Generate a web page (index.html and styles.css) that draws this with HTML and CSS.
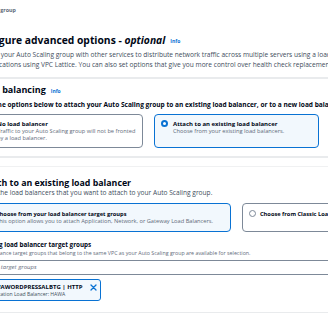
FILE: index.html
```html
<!DOCTYPE html>
<html lang="en">
<head>
  <meta charset="UTF-8">
  <title>Configure advanced options</title>
  <link rel="stylesheet" href="styles.css">
</head>
<body>
  <div class="page">
    <div class="crumbs">Create Auto Scaling group</div>

    <header class="page-head">
      <h1>Configure advanced options - <i>optional</i><a class="info" href="#">Info</a></h1>
      <p class="lead">Integrate your Auto Scaling group with other services to distribute network traffic across multiple servers using a load balancer or to establish service-to-service<br><span class="lead-wrap">communications using VPC Lattice. You can also set options that give you more control over health check replacements and monitoring.</span></p>
    </header>

    <section class="panel panel-first">
      <h2>Load balancing<a class="info" href="#">Info</a></h2>
      <p class="hint">Use the options below to attach your Auto Scaling group to an existing load balancer, or to a new load balancer that you define.</p>
      <div class="tiles tiles-3">
        <label class="tile">
          <span class="radio"></span>
          <span>
            <span class="tile-title">No load balancer</span>
            <span class="tile-desc">Traffic to your Auto Scaling group will not be fronted<br>by a load balancer.</span>
          </span>
        </label>
        <label class="tile selected">
          <span class="radio on"></span>
          <span>
            <span class="tile-title">Attach to an existing load balancer</span>
            <span class="tile-desc">Choose from your existing load balancers.</span>
          </span>
        </label>
        <label class="tile">
          <span class="radio"></span>
          <span>
            <span class="tile-title">Attach to a new load balancer</span>
            <span class="tile-desc">Quickly create a basic load balancer to attach to your Auto Scaling group.</span>
          </span>
        </label>
      </div>
    </section>

    <section class="panel panel-second">
      <h2>Attach to an existing load balancer</h2>
      <p class="desc">Select the load balancers that you want to attach to your Auto Scaling group.</p>
      <div class="tiles tiles-2">
        <label class="tile tile-lg selected">
          <span class="radio on"></span>
          <span>
            <span class="tile-title">Choose from your load balancer target groups</span>
            <span class="tile-desc">This option allows you to attach Application, Network, or Gateway Load Balancers.</span>
          </span>
        </label>
        <label class="tile tile-lg">
          <span class="radio"></span>
          <span>
            <span class="tile-title">Choose from Classic Load Balancers</span>
          </span>
        </label>
      </div>

      <div class="field">
        <div class="field-label">Existing load balancer target groups</div>
        <div class="field-desc">Only instance target groups that belong to the same VPC as your Auto Scaling group are available for selection.</div>
        <div class="select">Select target groups</div>
        <div class="token">
          <div>
            <div class="token-name">HAWAWORDPRESSALBTG | HTTP</div>
            <div class="token-desc">Application Load Balancer: HAWA</div>
          </div>
          <svg class="token-x" width="7" height="7" viewBox="0 0 7 7">
            <path d="M1 1 L6 6 M6 1 L1 6" stroke="#0972d3" stroke-width="1.3" stroke-linecap="round" fill="none"/>
          </svg>
        </div>
      </div>
    </section>
  </div>
</body>
</html>
```

FILE: styles.css
```css
* {
  box-sizing: border-box;
  margin: 0;
  padding: 0;
}
body {
  background: #fff;
  color: #000716;
  font-family: 'Open Sans', 'Liberation Sans', sans-serif;
  overflow: hidden;
  width: 328px;
  height: 320px;
}
.page {
  margin-left: -28px;
  width: 760px;
}
.crumbs {
  width: 44px;
  margin-top: 6px;
  display: flex;
  justify-content: flex-end;
  white-space: nowrap;
  font-size: 5.4px;
  line-height: 8px;
  font-weight: bold;
  color: #5f6b7a;
}
.page-head h1 {
  margin-top: 19px;
  font-size: 10.3px;
  line-height: 14px;
  font-weight: bold;
}
.info {
  color: #0972d3;
  font-size: 5px;
  font-weight: bold;
  font-style: normal;
  margin-left: 5px;
  text-decoration: none;
  vertical-align: middle;
}
.lead {
  margin-top: 2px;
  margin-left: -1px;
  font-size: 6.6px;
  line-height: 10px;
  color: #414d5c;
  white-space: nowrap;
}
.lead-wrap {
  margin-left: -1px;
}
.panel {
  padding-left: 6px;
}
.panel-first {
  margin-top: 7px;
  border-top: 2px solid #e9ebed;
  border-bottom: 2px solid #e9ebed;
  padding-top: 5px;
  padding-bottom: 8px;
}
.panel-second {
  margin-top: 8px;
  border-top: 1px solid #f0f1f2;
  border-bottom: 1px solid #e9ebed;
  padding-top: 10px;
  padding-bottom: 11px;
}
h2 {
  font-size: 9px;
  line-height: 12px;
  font-weight: bold;
}
.panel-second h2 {
  font-size: 8.8px;
}
.hint {
  margin-top: 4px;
  margin-left: 3px;
  font-size: 6.55px;
  line-height: 8px;
  font-weight: bold;
  white-space: nowrap;
}
.desc {
  font-size: 6.6px;
  line-height: 8px;
  color: #414d5c;
  white-space: nowrap;
}
.tiles {
  display: grid;
  gap: 11px;
  margin-top: 5px;
}
.tiles-3 {
  grid-template-columns: repeat(3, 165px);
}
.tiles-2 {
  margin-top: 6px;
  grid-template-columns: repeat(2, 253px);
}
.tile {
  display: flex;
  gap: 5px;
  border: 1px solid #7d8998;
  border-radius: 4px;
  padding: 5px 6px;
  background: #fff;
}
.tile-lg {
  padding: 6px;
  gap: 4px;
}
.tile.selected {
  border-color: #0972d3;
  background: #f2f8fd;
}
.radio {
  flex: none;
  width: 7px;
  height: 7px;
  border-radius: 50%;
  border: 1px solid #7d8998;
  background: #fff;
  margin-top: 0.5px;
}
.radio.on {
  border: 2px solid #0972d3;
}
.tile-title {
  display: block;
  font-size: 6px;
  line-height: 8px;
  font-weight: bold;
  white-space: nowrap;
}
.tile-lg .tile-title {
  font-size: 5.7px;
}
.tile-desc {
  display: block;
  font-size: 5.7px;
  line-height: 7px;
  color: #5f6b7a;
  white-space: nowrap;
}
.field {
  margin-top: 9px;
}
.field-label {
  font-size: 6.3px;
  line-height: 8px;
  font-weight: bold;
}
.field-desc {
  margin-top: 1px;
  font-size: 5.3px;
  line-height: 7px;
  color: #5f6b7a;
  white-space: nowrap;
}
.select {
  margin-top: 3px;
  width: 600px;
  height: 15px;
  border: 1px solid #7d8998;
  border-radius: 4px;
  padding-left: 5px;
  font-size: 6px;
  line-height: 13px;
  font-style: italic;
  color: #5f6b7a;
}
.token {
  margin-top: 4px;
  width: 123px;
  height: 22px;
  border: 1px solid #0972d3;
  border-radius: 3px;
  background: #f2f8fd;
  padding: 3px 3px 0 7px;
  display: flex;
  justify-content: space-between;
}
.token-name {
  font-size: 6px;
  line-height: 8px;
  font-weight: bold;
  white-space: nowrap;
}
.token-desc {
  font-size: 5.1px;
  line-height: 7px;
  color: #414d5c;
  white-space: nowrap;
}
.token-x {
  margin-top: 1px;
}
```
